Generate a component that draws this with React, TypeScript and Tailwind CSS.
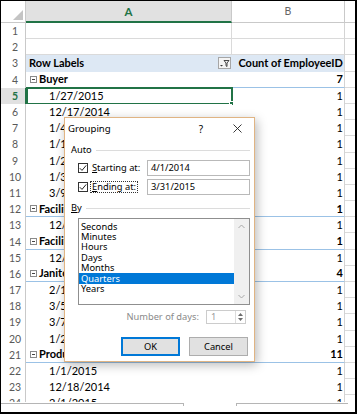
import React from "react";

type RowKind = "empty" | "head" | "group" | "item";
type SheetRow = { n: number; kind: RowKind; label?: string; value?: string };

const ROWS: SheetRow[] = [
  { n: 1, kind: "empty" },
  { n: 2, kind: "empty" },
  { n: 3, kind: "head", label: "Row Labels", value: "Count of EmployeeID" },
  { n: 4, kind: "group", label: "Buyer", value: "7" },
  { n: 5, kind: "item", label: "1/27/2015", value: "1" },
  { n: 6, kind: "item", label: "12/17/2014", value: "1" },
  { n: 7, kind: "item", label: "1/4/2015", value: "1" },
  { n: 8, kind: "item", label: "1/19/2015", value: "1" },
  { n: 9, kind: "item", label: "1/22/2015", value: "1" },
  { n: 10, kind: "item", label: "1/31/2015", value: "1" },
  { n: 11, kind: "item", label: "3/9/2015", value: "1" },
  { n: 12, kind: "group", label: "Facilities Engineer", value: "1" },
  { n: 13, kind: "item", label: "12/5/2014", value: "1" },
  { n: 14, kind: "group", label: "Facilities Manager", value: "1" },
  { n: 15, kind: "item", label: "12/20/2014", value: "1" },
  { n: 16, kind: "group", label: "Janitor", value: "4" },
  { n: 17, kind: "item", label: "2/17/2015", value: "1" },
  { n: 18, kind: "item", label: "3/5/2015", value: "1" },
  { n: 19, kind: "item", label: "3/7/2015", value: "1" },
  { n: 20, kind: "item", label: "1/22/2015", value: "1" },
  { n: 21, kind: "group", label: "Production", value: "11" },
  { n: 22, kind: "item", label: "1/1/2015", value: "1" },
  { n: 23, kind: "item", label: "12/18/2014", value: "1" },
  { n: 24, kind: "item", label: "2/1/2015", value: "1" },
];

const BY_ITEMS = ["Seconds", "Minutes", "Hours", "Days", "Months", "Quarters", "Years"];

function CollapseBox() {
  return (
    <span className="mr-[2px] flex h-[7px] w-[7px] items-center justify-center border border-[#8a8a8a] bg-white">
      <span className="h-px w-[3px] bg-[#444]" />
    </span>
  );
}

function FilterButton() {
  return (
    <span className="flex h-[12px] w-[13px] items-center justify-center border border-[#a6a6a6] bg-[#f4f4f4]">
      <svg width="11" height="9" viewBox="0 0 11 9">
        <path d="M1 6h3l-1.5 1.6z" fill="#333" />
        <path d="M5 1.5h5L8 4v3.5L7 6.8V4z" fill="none" stroke="#333" strokeWidth="0.9" />
      </svg>
    </span>
  );
}

function SheetRowView({ row }: { row: SheetRow }) {
  const selected = row.n === 5;
  const bold = row.kind === "head" || row.kind === "group";
  const pivotBg = row.kind === "head" ? "bg-[#dde8f4]" : "bg-white";
  const lineB =
    row.kind === "group"
      ? "border-b border-[#9bc2e6]"
      : row.kind === "empty"
      ? "border-b border-[#dadada]"
      : "";

  return (
    <div className="flex h-[16.2px] shrink-0 leading-[14px]">
      <div
        className={`flex w-[25px] shrink-0 items-center justify-center border-r pl-[4px] text-[10.5px] ${
          selected
            ? "border-[#217346] bg-[#e1e1e1] font-bold text-[#217346]"
            : "border-[#c9c9c9] bg-white text-[#595959]"
        }`}
      >
        {row.n}
      </div>
      <div
        className={`relative flex w-[206px] shrink-0 items-center ${pivotBg} ${lineB} ${
          row.kind === "empty" ? "border-r border-r-[#dadada]" : ""
        } ${bold ? "font-bold" : ""}`}
      >
        {row.kind === "head" && (
          <>
            <span className="pl-[3px]">{row.label}</span>
            <span className="ml-auto mr-[1px]">
              <FilterButton />
            </span>
          </>
        )}
        {row.kind === "group" && (
          <span className="flex items-center whitespace-nowrap pl-[4px]">
            <CollapseBox />
            {row.label}
          </span>
        )}
        {row.kind === "item" && <span className="whitespace-nowrap pl-[23px]">{row.label}</span>}
        {selected && (
          <span className="absolute -bottom-[1px] -right-[1px] -top-[1px] left-0 border-2 border-[#217346]">
            <span className="absolute -bottom-[3px] -right-[3px] h-[5px] w-[5px] border border-white bg-[#217346]" />
          </span>
        )}
      </div>
      <div
        className={`flex w-[113px] shrink-0 items-center justify-end overflow-visible whitespace-nowrap border-r border-r-[#d4d4d4] pr-[1px] ${pivotBg} ${lineB} ${
          bold ? "font-bold" : ""
        }`}
      >
        {row.value}
      </div>
      <div className="flex-1 border-b border-[#dadada] bg-white" />
    </div>
  );
}

function CheckBox() {
  return (
    <span className="flex h-[10px] w-[10px] shrink-0 items-center justify-center border border-[#333] bg-white">
      <svg width="8" height="8" viewBox="0 0 8 8">
        <path d="M0.8 4.2l2.2 2.2L7.2 1.4" fill="none" stroke="#222" strokeWidth="1" />
      </svg>
    </span>
  );
}

function GroupingDialog() {
  return (
    <div
      className="absolute left-[63px] top-[116px] flex h-[245px] w-[191px] flex-col border border-[#e0b483] bg-white text-[9.3px] leading-[12px] text-black shadow-[2px_3px_10px_rgba(0,0,0,0.28)]"
      style={{ fontFamily: '"Noto Sans", "Open Sans", sans-serif' }}
    >
      <div className="flex h-[21px] shrink-0 items-center">
        <span className="pl-[3px] text-[9.6px]">Grouping</span>
        <span className="ml-auto flex w-[30px] justify-center text-[10px]">?</span>
        <span className="ml-[6px] mr-[2px] flex w-[30px] justify-center">
          <svg width="9" height="9" viewBox="0 0 9 9">
            <path d="M0.5 0.5l8 8M8.5 0.5l-8 8" stroke="#222" strokeWidth="0.9" />
          </svg>
        </span>
      </div>

      <div className="flex flex-col pl-[6px] pr-[4px]">
        <div className="mt-[5px] flex h-[12px] items-center">
          <span>Auto</span>
          <span className="ml-[4px] h-px flex-1 bg-[#dcdcdc]" />
        </div>

        <div className="mt-[4px] flex h-[16px] items-center">
          <div className="flex w-[76px] items-center pl-[7px]">
            <CheckBox />
            <span className="ml-[4px] whitespace-nowrap">
              <span className="underline">S</span>tarting at:
            </span>
          </div>
          <div className="flex h-full flex-1 items-center border border-[#b9b9b9] bg-white pl-[3px]">4/1/2014</div>
        </div>

        <div className="mt-[3px] flex h-[16px] items-center">
          <div className="flex w-[76px] items-center pl-[7px]">
            <CheckBox />
            <span className="ml-[3px] whitespace-nowrap px-[1px] leading-[10px] outline-1 outline-dotted outline-[#333]">
              <span className="underline">E</span>nding at:
            </span>
          </div>
          <div className="flex h-full flex-1 items-center border border-[#b9b9b9] bg-white pl-[3px]">3/31/2015</div>
        </div>

        <div className="mt-[7px] flex h-[12px] items-center">
          <span>
            <span className="underline">B</span>y
          </span>
          <span className="ml-[4px] h-px flex-1 bg-[#dcdcdc]" />
        </div>

        <div className="ml-[7px] mt-[4px] flex h-[87px] border border-[#8f8f8f] bg-white">
          <div className="flex flex-1 flex-col pt-[2.5px]">
            {BY_ITEMS.map((item) => (
              <div
                key={item}
                className={`flex h-[10.4px] items-center pl-[2px] leading-[10px] ${
                  item === "Quarters" ? "bg-[#0078d7] text-white" : ""
                }`}
              >
                {item}
              </div>
            ))}
          </div>
          <div className="flex w-[15px] flex-col items-center justify-between bg-[#f0f0f0] py-[5px]">
            <svg width="7" height="5" viewBox="0 0 7 5">
              <path d="M0.5 4L3.5 1l3 3" fill="none" stroke="#a8a8a8" strokeWidth="1" />
            </svg>
            <svg width="7" height="5" viewBox="0 0 7 5">
              <path d="M0.5 1l3 3 3-3" fill="none" stroke="#a8a8a8" strokeWidth="1" />
            </svg>
          </div>
        </div>

        <div className="mt-[5px] flex h-[14px] items-center justify-end pr-[4px]">
          <span className="text-[#8a8a8a]">Number of days:</span>
          <div className="ml-[7px] flex h-full w-[40px] border border-[#cccccc] bg-white">
            <span className="flex flex-1 items-center pl-[4px] text-[#9a9a9a]">1</span>
            <div className="flex w-[10px] flex-col items-center justify-center gap-[2px] border-l border-[#dcdcdc]">
              <svg width="5" height="3" viewBox="0 0 5 3">
                <path d="M0 3L2.5 0 5 3z" fill="#6d6d6d" />
              </svg>
              <svg width="5" height="3" viewBox="0 0 5 3">
                <path d="M0 0l2.5 3L5 0z" fill="#6d6d6d" />
              </svg>
            </div>
          </div>
        </div>

        <div className="mt-[13px] flex h-[19px] justify-end gap-[9px] pr-[2px]">
          <button className="flex w-[59px] items-center justify-center border border-[#0078d7] bg-[#e1e1e1] shadow-[inset_0_0_0_1px_#0078d7]">
            OK
          </button>
          <button className="flex w-[59px] items-center justify-center border border-[#adadad] bg-[#e1e1e1]">
            Cancel
          </button>
        </div>
      </div>
    </div>
  );
}

export default function App() {
  return (
    <div
      className="relative h-[414px] w-[357px] overflow-hidden border-b-2 border-l border-r-2 border-t border-black bg-white text-[11px] text-black"
      style={{ fontFamily: "Lato, 'Liberation Sans', sans-serif" }}
    >
      {/* column headers */}
      <div className="flex h-[22px]">
        <div className="relative w-[25px] shrink-0 border-b border-r border-[#c9c9c9] bg-white">
          <svg className="absolute bottom-[2px] right-[2px]" width="10" height="10" viewBox="0 0 10 10">
            <path d="M10 0V10H0z" fill="#c4c4c4" />
          </svg>
        </div>
        <div className="flex w-[206px] shrink-0 items-center justify-center border-b-2 border-r border-b-[#217346] border-r-[#c9c9c9] bg-[#e1e1e1] pt-[1px] text-[11.5px] font-bold text-[#217346]">
          A
        </div>
        <div className="flex w-[113px] shrink-0 items-center justify-center border-b border-r border-[#c9c9c9] bg-white text-[10.5px] text-[#666]">
          B
        </div>
        <div className="flex-1 border-b border-[#c9c9c9] bg-white" />
      </div>

      {/* grid rows */}
      <div className="flex h-[379px] flex-col overflow-hidden">
        {ROWS.map((row) => (
          <SheetRowView key={row.n} row={row} />
        ))}
      </div>

      {/* torn bottom edge */}
      <div className="mt-[1px] flex">
        <div className="h-[3px] w-[183px] border-r border-t border-[#b5b5b5]" />
        <div className="ml-[52px] h-[3px] w-[112px] border-l border-t border-[#b5b5b5]" />
      </div>

      <GroupingDialog />
    </div>
  );
}
